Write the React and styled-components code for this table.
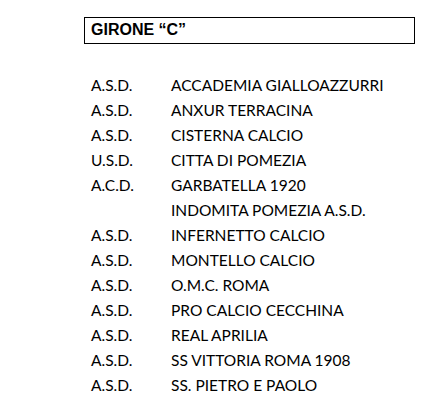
import React from "react";
import styled, { createGlobalStyle } from "styled-components";

const GlobalStyle = createGlobalStyle`
  body {
    margin: 0;
    background: #fff;
  }
`;

const Page = styled.div`
  padding: 17px 0 0 84px;
  width: 433px;
  height: 401px;
  box-sizing: border-box;
  overflow: hidden;
`;

const Header = styled.div`
  width: 331px;
  height: 27px;
  box-sizing: border-box;
  border: 1.5px solid #000;
  padding: 3px 0 0 6px;
  font-family: "Liberation Sans", Arial, sans-serif;
  font-weight: bold;
  font-size: 16px;
  color: #000;
`;

const List = styled.div`
  margin-top: 29px;
  padding-left: 7px;
  font-family: Lato, sans-serif;
  font-size: 15.5px;
  color: #000;
`;

const Row = styled.div`
  display: grid;
  grid-template-columns: 80px 1fr;
  height: 25px;
  line-height: 25px;
  white-space: nowrap;
`;

const teams = [
  ["A.S.D.", "ACCADEMIA GIALLOAZZURRI"],
  ["A.S.D.", "ANXUR TERRACINA"],
  ["A.S.D.", "CISTERNA CALCIO"],
  ["U.S.D.", "CITTA DI POMEZIA"],
  ["A.C.D.", "GARBATELLA 1920"],
  ["", "INDOMITA POMEZIA A.S.D."],
  ["A.S.D.", "INFERNETTO CALCIO"],
  ["A.S.D.", "MONTELLO CALCIO"],
  ["A.S.D.", "O.M.C. ROMA"],
  ["A.S.D.", "PRO CALCIO CECCHINA"],
  ["A.S.D.", "REAL APRILIA"],
  ["A.S.D.", "SS VITTORIA ROMA 1908"],
  ["A.S.D.", "SS. PIETRO E PAOLO"],
];

function App() {
  return (
    <Page>
      <GlobalStyle />
      <Header>GIRONE “C”</Header>
      <List>
        {teams.map(([tipo, nome]) => (
          <Row key={nome}>
            <span>{tipo}</span>
            <span>{nome}</span>
          </Row>
        ))}
      </List>
    </Page>
  );
}

export default App;
